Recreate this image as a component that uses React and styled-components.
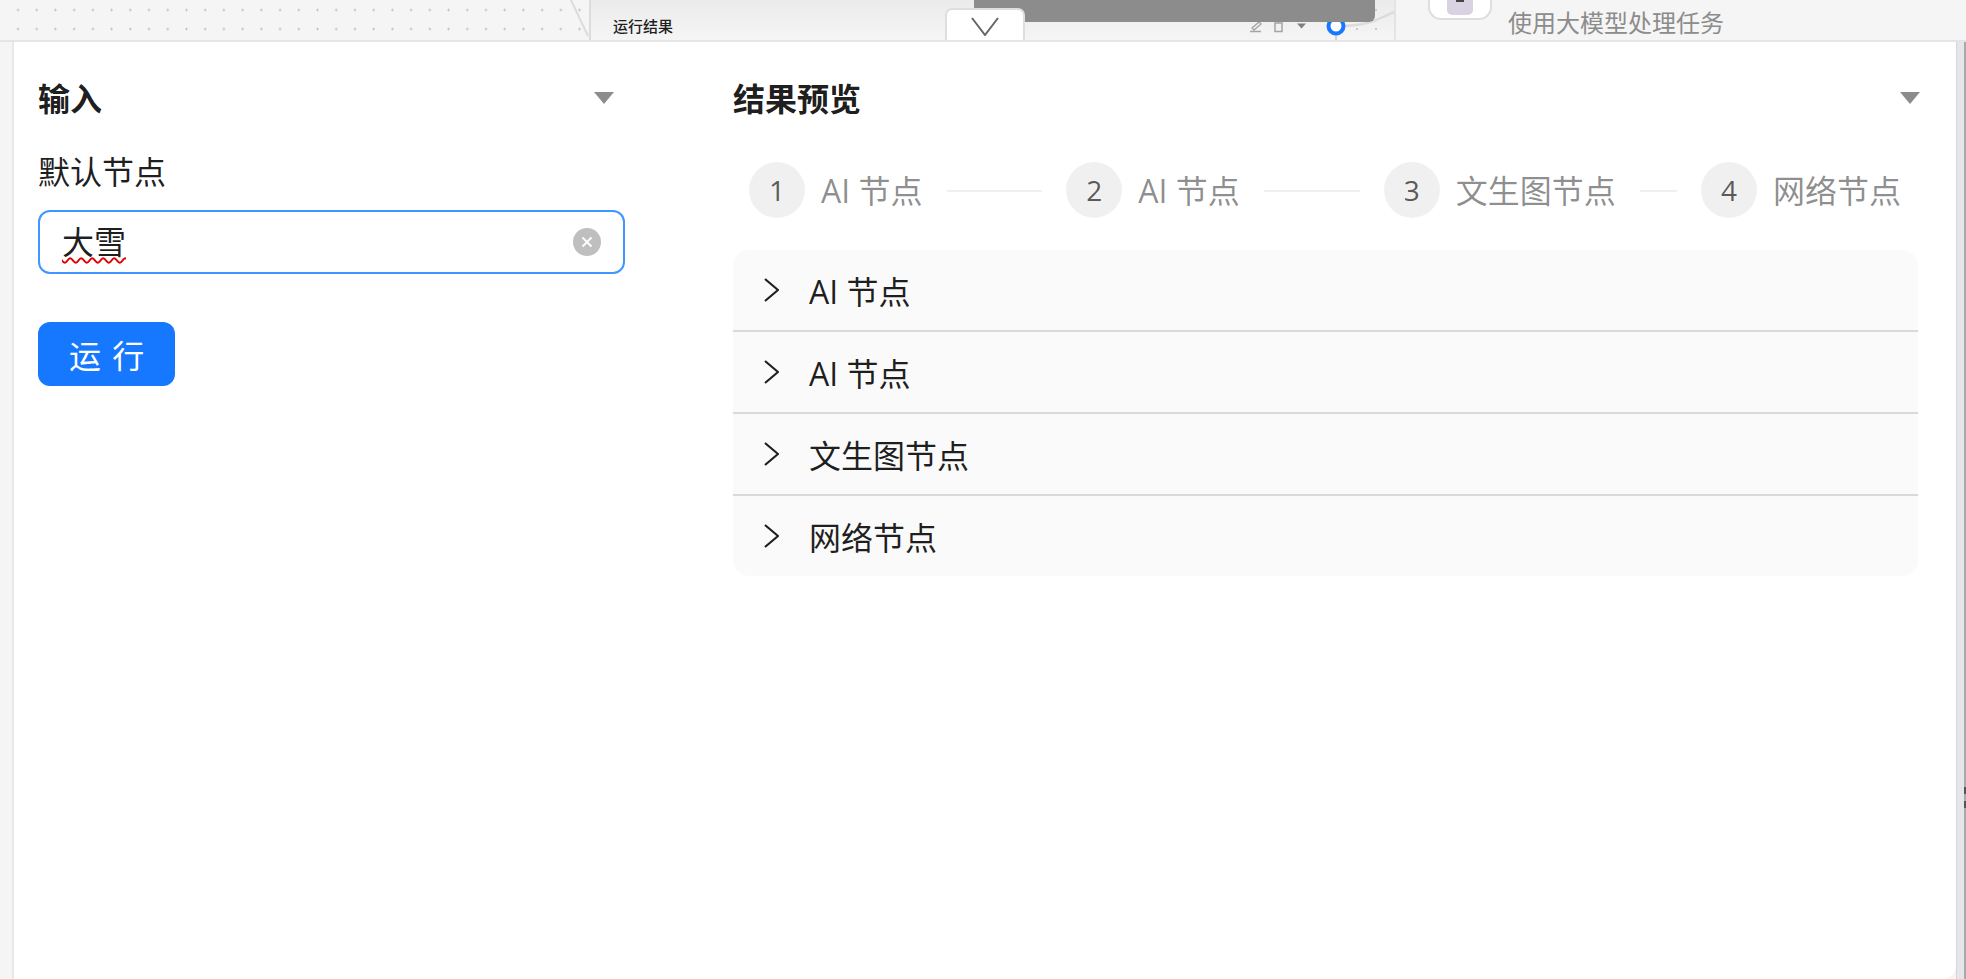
import React from "react";
import styled, { createGlobalStyle } from "styled-components";

const Global = createGlobalStyle`
  html, body { margin: 0; padding: 0; height: 100%; background: #f5f5f5; overflow: hidden; }
  #root { height: 100%; }
  * { box-sizing: border-box; }
`;

const Page = styled.div`
  height: 100vh;
  display: flex;
  flex-direction: column;
  font-family: "Open Sans", "Noto Sans CJK SC", sans-serif;
  color: rgba(0, 0, 0, 0.88);
`;

const TopStrip = styled.div`
  height: 42px;
  flex: none;
  display: flex;
  background: #f5f5f5;
  border-bottom: 2px solid #e5e5e5;
  overflow: hidden;
`;
const StripGutter = styled.div`
  width: 14px;
  flex: none;
`;
const CanvasPane = styled.div`
  position: relative;
  width: 575px;
  flex: none;
  background-image: radial-gradient(circle at center, #bdbdbd 0.9px, transparent 1.3px);
  background-size: 18.72px 19px;
  background-position: -5.36px 0.5px;
`;
const CanvasEdge = styled.svg`
  position: absolute;
  right: 0;
  top: 0;
`;
const ResultPane = styled.div`
  position: relative;
  width: 807px;
  flex: none;
  padding: 13px 0 0 22px;
  border-left: 2px solid #dcdcdc;
  border-right: 2px solid #e4e4e4;
  background: linear-gradient(180deg, #ebebeb 0%, #f5f5f5 100%);
`;
const ResultTitle = styled.div`
  font-size: 15px;
  line-height: 26px;
  font-weight: 500;
  color: #1f1f1f;
`;
const PaneDrawing = styled.svg`
  position: absolute;
  left: 0;
  top: 0;
`;
const GreyBlock = styled.div`
  position: absolute;
  left: 383px;
  top: 0;
  width: 401px;
  height: 22px;
  background: #8c8c8c;
  border-bottom-right-radius: 6px;
`;
const ToggleTab = styled.div`
  position: absolute;
  left: 354px;
  top: 8px;
  width: 80px;
  height: 32px;
  display: flex;
  justify-content: center;
  padding-top: 7px;
  background: #fff;
  border: 2px solid #dedede;
  border-bottom: none;
  border-radius: 7px 7px 0 0;
`;
const NodePane = styled.div`
  flex: 1;
  display: flex;
  gap: 16px;
  padding-left: 32px;
`;
const NodeCard = styled.div`
  width: 64px;
  height: 20px;
  flex: none;
  display: flex;
  justify-content: center;
  background: #fff;
  border: 2px solid #dedede;
  border-top: none;
  border-radius: 0 0 13px 13px;
`;
const NodeBadge = styled.div`
  width: 26px;
  height: 15px;
  display: flex;
  justify-content: center;
  background: #d9d2e3;
  border-radius: 0 0 5px 5px;
`;
const NodeBadgeMark = styled.div`
  width: 8px;
  height: 2px;
  background: #444;
`;
const NodeText = styled.div`
  font-size: 24px;
  line-height: 32px;
  margin-top: 7px;
  color: #8c8c8c;
  white-space: nowrap;
`;

const Body = styled.div`
  flex: 1;
  min-height: 0;
  display: flex;
`;
const LeftGutter = styled.div`
  width: 14px;
  flex: none;
  background: #f5f5f5;
  border-right: 2px solid #e8e8e8;
`;
const Panel = styled.main`
  flex: 1;
  min-width: 0;
  display: grid;
  grid-template-columns: 587px 1185px;
  column-gap: 108px;
  align-items: start;
  padding: 33px 0 0 24px;
  background: #fff;
  border-bottom-right-radius: 14px;
`;
const RightRail = styled.div`
  width: 10px;
  flex: none;
  display: flex;
  background: #e6e6ea;
  border-left: 1px solid #d6d6da;
`;
const RailFill = styled.div`
  flex: 1;
`;
const RailEdge = styled.div`
  width: 2px;
  flex: none;
  display: flex;
  flex-direction: column;
  background: #a9a9ab;
`;
const RailMark = styled.div`
  width: 2px;
  height: 28px;
  margin-top: 745px;
  background: repeating-linear-gradient(180deg, #555 0 7px, #a9a9ab 7px 14px);
`;

const Column = styled.section`
  display: flex;
  flex-direction: column;
`;
const HeaderRow = styled.header`
  height: 48px;
  display: flex;
  align-items: center;
  justify-content: space-between;
  padding-right: ${(p) => p.$inset}px;
`;
const SectionTitle = styled.h2`
  margin: 0;
  font-size: 32px;
  line-height: 48px;
  font-weight: 700;
  color: rgba(0, 0, 0, 0.9);
`;
const Caret = styled.span`
  width: 0;
  height: 0;
  margin-right: ${(p) => p.$shift || 0}px;
  margin-bottom: 2px;
  border-left: 10px solid transparent;
  border-right: 10px solid transparent;
  border-top: 12px solid #8c8c8c;
`;
const FieldLabel = styled.label`
  margin-top: 27px;
  font-size: 32px;
  line-height: 44px;
`;
const Field = styled.div`
  margin-top: 16px;
  height: 64px;
  display: flex;
  align-items: center;
  justify-content: space-between;
  padding: 0 22px;
  border: 2px solid #4096ff;
  border-radius: 12px;
  background: #fff;
`;
const FieldValue = styled.span`
  font-size: 32px;
  line-height: 44px;
  text-decoration: underline wavy #e00000 1.5px;
  text-underline-offset: 3px;
`;
const ClearButton = styled.span`
  width: 28px;
  height: 28px;
  display: flex;
  align-items: center;
  justify-content: center;
  border-radius: 50%;
  background: #bfbfbf;
`;
const RunButton = styled.button`
  align-self: flex-start;
  margin-top: 48px;
  height: 64px;
  padding: 0 31px;
  border: none;
  border-radius: 12px;
  background: #1677ff;
  color: #fff;
  font-family: inherit;
  font-size: 32px;
  word-spacing: 3px;
`;

const Steps = styled.ol`
  list-style: none;
  margin: 39px 0 0;
  padding: 0 17px 0 16px;
  display: flex;
`;
const Step = styled.li`
  display: flex;
  align-items: center;
  flex: ${(p) => (p.$last ? "none" : "1 1 0")};
  min-width: 0;
`;
const StepNumber = styled.span`
  width: 56px;
  height: 56px;
  flex: none;
  display: flex;
  align-items: center;
  justify-content: center;
  border-radius: 50%;
  background: rgba(0, 0, 0, 0.06);
  color: rgba(0, 0, 0, 0.65);
  font-size: 28px;
`;
const StepTitle = styled.span`
  margin-left: 16px;
  padding-top: 2px;
  font-size: 32px;
  line-height: 48px;
  color: rgba(0, 0, 0, 0.45);
  white-space: nowrap;
`;
const StepTail = styled.span`
  flex: 1;
  height: 2px;
  margin: 2px 24px 0;
  background: #f0f0f0;
`;

const Collapse = styled.div`
  margin-top: 32px;
  background: #fafafa;
  border-radius: 16px;
  overflow: hidden;
`;
const CollapseRow = styled.div`
  height: ${(p) => (p.$last ? 80 : 82)}px;
  display: flex;
  align-items: center;
  gap: 30px;
  padding-left: 31px;
  border-bottom: ${(p) => (p.$last ? "none" : "2px solid #d9d9d9")};
  font-size: 32px;
  line-height: 48px;
`;
const CollapseLabel = styled.span`
  padding-top: 3px;
`;

const stepsData = ["AI 节点", "AI 节点", "文生图节点", "网络节点"];

const Chevron = () => (
  <svg width="15" height="24" viewBox="0 0 15 24" fill="none" stroke="#1f1f1f" strokeWidth="2.2">
    <polyline points="1,1 14,12 1,23" />
  </svg>
);

export default function App() {
  return (
    <Page>
      <Global />
      <TopStrip>
        <StripGutter />
        <CanvasPane>
          <CanvasEdge width="24" height="40" viewBox="0 0 24 40" fill="none">
            <line x1="5" y1="-2" x2="23" y2="36" stroke="#dcdcdc" strokeWidth="2" />
          </CanvasEdge>
        </CanvasPane>
        <ResultPane>
          <ResultTitle>运行结果</ResultTitle>
          <PaneDrawing width="805" height="40" viewBox="0 0 805 40" fill="none">
            <path d="M743 26 C775 27 785 20 803 12" stroke="#dcdcdc" strokeWidth="2.5" />
            <circle cx="766" cy="29" r="1" fill="#bdbdbd" />
            <circle cx="785" cy="29" r="1" fill="#bdbdbd" />
            <circle cx="785" cy="10" r="1" fill="#bdbdbd" />
            <path d="M745 35V40" stroke="#c4c4c4" strokeWidth="1.5" />
            <circle cx="745" cy="26" r="7.5" fill="#fff" stroke="#1677ff" strokeWidth="4" />
            <path d="M659 31.5h11M661 28l7-6 2 2-7 6z" stroke="#a4a4a4" strokeWidth="1.3" />
            <path d="M684 23h7v8.5h-7z" stroke="#a4a4a4" strokeWidth="1.5" />
            <path d="M706 23.5h9l-4.5 5z" fill="#7f7f7f" />
          </PaneDrawing>
          <GreyBlock />
          <ToggleTab>
            <svg width="28" height="19" viewBox="0 0 28 19" fill="none" stroke="#666" strokeWidth="2">
              <polyline points="1,1 14,18 27,1" />
            </svg>
          </ToggleTab>
        </ResultPane>
        <NodePane>
          <NodeCard>
            <NodeBadge>
              <NodeBadgeMark />
            </NodeBadge>
          </NodeCard>
          <NodeText>使用大模型处理任务</NodeText>
        </NodePane>
      </TopStrip>
      <Body>
        <LeftGutter />
        <Panel>
          <Column>
            <HeaderRow $inset={11}>
              <SectionTitle>输入</SectionTitle>
              <Caret />
            </HeaderRow>
            <FieldLabel>默认节点</FieldLabel>
            <Field>
              <FieldValue>大雪</FieldValue>
              <ClearButton>
                <svg width="12" height="12" viewBox="0 0 12 12" stroke="#fff" strokeWidth="1.8">
                  <path d="M1.5 1.5l9 9M10.5 1.5l-9 9" />
                </svg>
              </ClearButton>
            </Field>
            <RunButton>运 行</RunButton>
          </Column>
          <Column>
            <HeaderRow $inset={0}>
              <SectionTitle>结果预览</SectionTitle>
              <Caret $shift={-2} />
            </HeaderRow>
            <Steps>
              {stepsData.map((title, i) => {
                const last = i === stepsData.length - 1;
                return (
                  <Step key={i} $last={last}>
                    <StepNumber>{i + 1}</StepNumber>
                    <StepTitle>{title}</StepTitle>
                    {!last && <StepTail />}
                  </Step>
                );
              })}
            </Steps>
            <Collapse>
              {stepsData.map((title, i) => (
                <CollapseRow key={i} $last={i === stepsData.length - 1}>
                  <Chevron />
                  <CollapseLabel>{title}</CollapseLabel>
                </CollapseRow>
              ))}
            </Collapse>
          </Column>
        </Panel>
        <RightRail>
          <RailFill />
          <RailEdge>
            <RailMark />
          </RailEdge>
        </RightRail>
      </Body>
    </Page>
  );
}
